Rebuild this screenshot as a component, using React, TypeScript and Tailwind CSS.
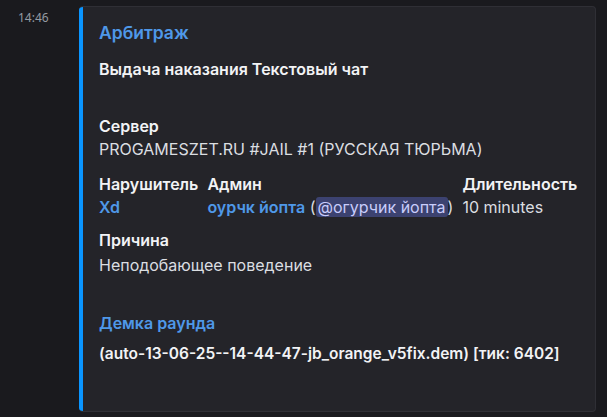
import React from 'react';

const font = { fontFamily: 'Inter, "Noto Sans", sans-serif' };

const Field: React.FC<{ name: string; children: React.ReactNode; className?: string; valueClass?: string }> = ({ name, children, className, valueClass = 'mt-[5px]' }) => (
    <div className={className}>
        <div className="text-[16px] leading-[18px] font-semibold text-[#f2f3f5]">{name}</div>
        <div className={`${valueClass} text-[16px] leading-[18px] text-[#dbdee1]`}>{children}</div>
    </div>
);

export default function App() {
    return (
        <div className="w-[607px] h-[417px] bg-[#1a1a1e] overflow-hidden flex" style={font}>
            {/* Timestamp gutter */}
            <div className="w-[79px] shrink-0 pl-[18px] pt-[10px] text-[12px] leading-[16px] text-[#949ba4]" style={{ fontFamily: '"Noto Sans", sans-serif' }}>14:46</div>

            {/* Embed */}
            <div className="mt-[6px] w-[517px] h-[406px] flex rounded-[4px] overflow-hidden border border-l-0 border-[#2f2f35] bg-[#242429]">
                <div className="w-[4px] shrink-0 bg-[#0a95ff]" />
                <div className="pl-[16px] pt-[15px] flex flex-col">
                    <div className="text-[17.5px] leading-[22px] font-semibold text-[#4f98e8]">Арбитраж</div>
                    <div className="mt-[16px] text-[16px] leading-[18px] font-semibold text-[#f2f3f5]">
                        Выдача наказания Текстовый чат
                    </div>

                    <Field name="Сервер" className="mt-[39px]">
                        PROGAMESZET.RU #JAIL #1 (РУССКАЯ ТЮРЬМА)
                    </Field>

                    {/* Inline fields */}
                    <div className="mt-[17px] flex gap-[9px]">
                        <Field name="Нарушитель">
                            <span className="font-semibold text-[#4f98e8]">Xd</span>
                        </Field>
                        <Field name="Админ">
                            <span className="font-semibold text-[#4f98e8]">оурчк йопта</span>
                            <span> (</span>
                            <span className="rounded-[3px] px-[2px] bg-[#3c4270] text-[#c9cdfb]">@огурчик йопта</span>
                            <span>)</span>
                        </Field>
                        <Field name="Длительность">10 minutes</Field>
                    </div>

                    <Field name="Причина" className="mt-[15px]" valueClass="mt-[7px]">
                        Неподобающее поведение
                    </Field>

                    <div className="mt-[40px] text-[16px] leading-[18px] font-semibold text-[#4f98e8]">Демка раунда</div>
                    <div className="mt-[13px] text-[15.5px] leading-[18px] font-semibold text-[#f2f3f5]">
                        (auto-13-06-25--14-44-47-jb_orange_v5fix.dem) [тик: 6402]
                    </div>
                </div>
            </div>
        </div>
    );
}
